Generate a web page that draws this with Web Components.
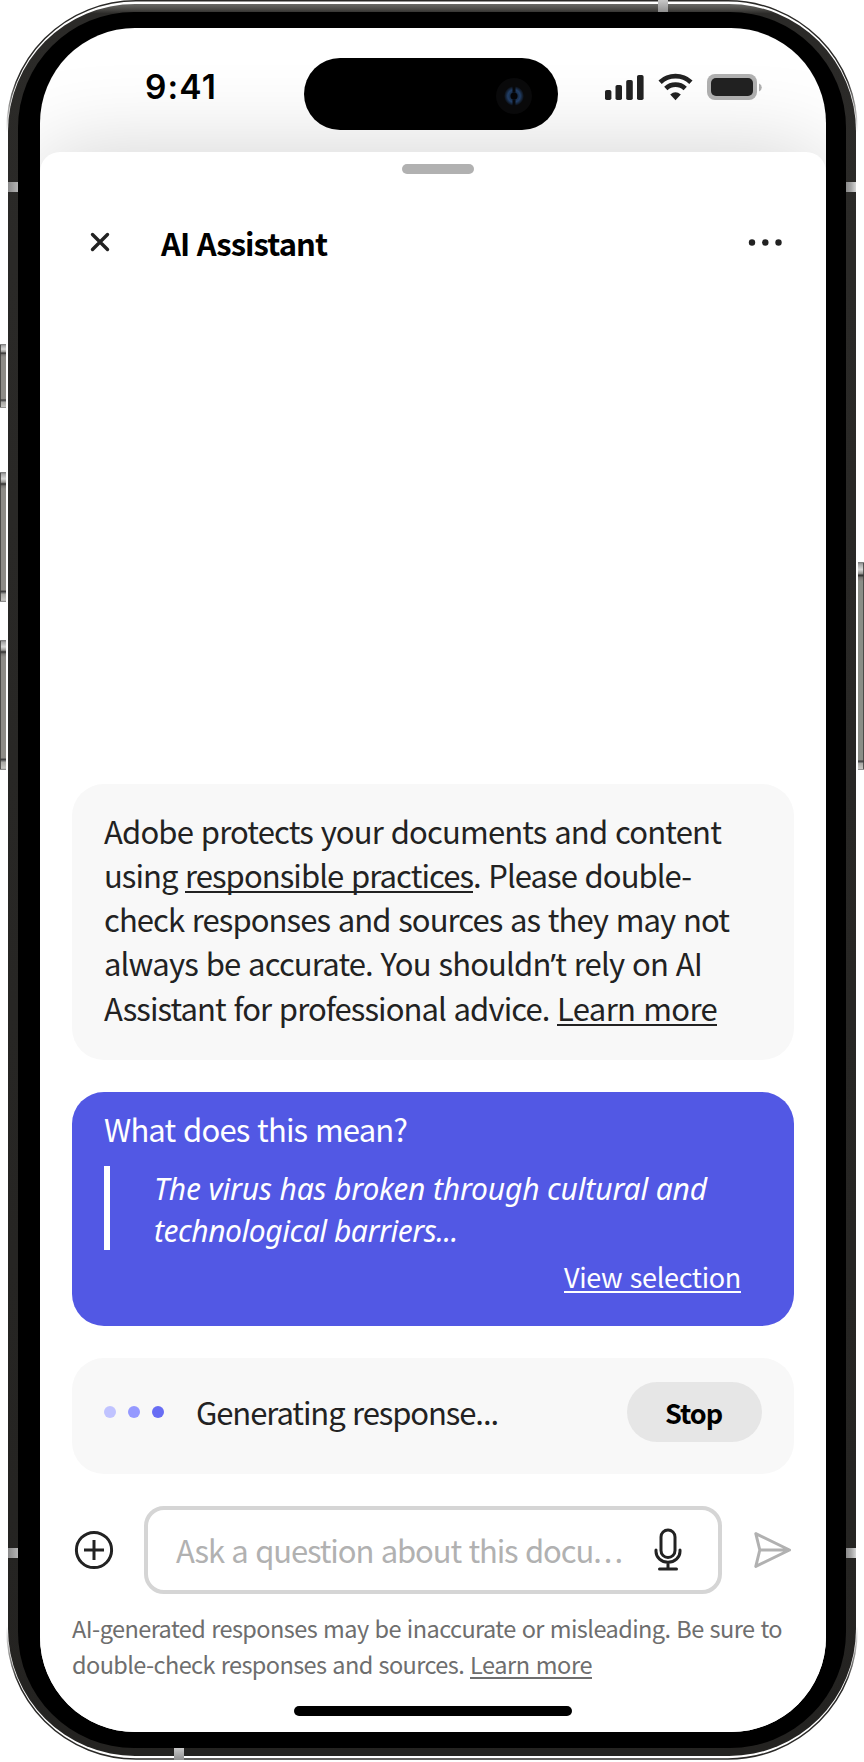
<!DOCTYPE html>
<html lang="en">
<head>
<meta charset="utf-8">
<title>AI Assistant</title>
<style>
html,body{margin:0;padding:0;background:#fff;overflow:hidden}
body{width:864px;height:1762px;font-family:"Noto Sans CJK SC","Noto Sans",sans-serif;color:#222;word-spacing:1.600px}
</style>
</head>
<body>
<device-frame>
  <status-bar></status-bar>
  <bottom-sheet>
    <sheet-header>AI Assistant</sheet-header>
    <chat-view></chat-view>
    <prompt-bar></prompt-bar>
    <legal-note></legal-note>
  </bottom-sheet>
</device-frame>
<script>
function component(name, html) {
  customElements.define(name, class extends HTMLElement {
    constructor() {
      super();
      this.attachShadow({ mode: 'open' }).innerHTML = html;
    }
  });
}

component('device-frame', `
<style>
:host{display:grid;width:864px;height:1762px}
svg,.screen{grid-area:1/1}
.screen{margin:28px 38px 30px 40px;height:1704px;border-radius:95px;overflow:hidden;background:#fff;display:flex;flex-direction:column}
</style>
<svg width="864" height="1762" viewBox="0 0 864 1762">
  <defs>
    <linearGradient id="body" x1="0" y1="0" x2="0" y2="1"><stop offset="0" stop-color="#696966"/><stop offset=".003" stop-color="#4a4946"/><stop offset=".0055" stop-color="#2b2a28"/><stop offset="1" stop-color="#242321"/></linearGradient>
    <linearGradient id="bl"><stop offset="0" stop-color="#8a8a8a"/><stop offset="1" stop-color="#b4b4b4"/></linearGradient>
    <linearGradient id="br"><stop offset="0" stop-color="#8a8a8a"/><stop offset=".5" stop-color="#a4a4a4"/><stop offset="1" stop-color="#d4d4d4"/></linearGradient>
    <linearGradient id="bv" x1="0" y1="0" x2="0" y2="1"><stop offset="0" stop-color="#c8c8c8"/><stop offset="1" stop-color="#8f8f8f"/></linearGradient>
    <linearGradient id="cap" x1="0" y1="0" x2="0" y2="1"><stop offset="0" stop-color="#777"/><stop offset=".14" stop-color="#aaa"/><stop offset=".4" stop-color="#d8d8d6"/><stop offset=".6" stop-color="#999895"/><stop offset=".7" stop-color="#302f2e"/><stop offset=".82" stop-color="#777572"/><stop offset="1" stop-color="#8e8c87"/></linearGradient>
    <linearGradient id="foot" x1="0" y1="0" x2="0" y2="1"><stop offset="0" stop-color="#8e8c87"/><stop offset=".1" stop-color="#333"/><stop offset=".25" stop-color="#777"/><stop offset=".35" stop-color="#aaa9a5"/><stop offset=".85" stop-color="#c6c5c1"/><stop offset="1" stop-color="#777"/></linearGradient>
    <linearGradient id="edge" gradientUnits="userSpaceOnUse" x1="0" y1="0" x2="0" y2="1762"><stop offset="0" stop-color="#2b2a28"/><stop offset=".045" stop-color="#2b2a28"/><stop offset=".075" stop-color="#2b2a28" stop-opacity="0"/><stop offset=".923" stop-color="#2b2a28" stop-opacity="0"/><stop offset=".955" stop-color="#2b2a28"/><stop offset="1" stop-color="#2b2a28"/></linearGradient>
  </defs>
  <rect x="7" y=".8" width="850" height="1758.2" rx="129" fill="none" stroke="url(#edge)" stroke-width="1.500"/>
  <rect x="8" y="4" width="848" height="1752" rx="127" fill="url(#body)"/>
  <rect x="18" y="12" width="828" height="1736" rx="116"/>
  <rect x="8" y="182" width="10" height="10" fill="url(#bl)"/>
  <rect x="846" y="182" width="10" height="10" fill="url(#br)"/>
  <rect x="8" y="1548" width="10" height="10" fill="url(#bl)"/>
  <rect x="846" y="1548" width="10" height="10" fill="url(#br)"/>
  <rect x="658" y="0" width="10" height="12" fill="url(#bv)"/>
  <rect x="174" y="1748" width="10" height="12" fill="url(#bv)"/>
  <g fill="#8e8c87">
    <rect x="0" y="344" width="6" height="64"/><rect x="0" y="472" width="6" height="130"/><rect x="0" y="640" width="6" height="130"/><rect x="858" y="562" width="6" height="208" fill="#8b8e87"/>
  </g>
  <g fill="url(#cap)">
    <rect x="0" y="344" width="6" height="13"/><rect x="0" y="472" width="6" height="17"/><rect x="0" y="640" width="6" height="17"/><rect x="858" y="562" width="6" height="19"/>
  </g>
  <g fill="url(#foot)">
    <rect x="0" y="399" width="6" height="9"/><rect x="0" y="590" width="6" height="12"/><rect x="0" y="758" width="6" height="12"/><rect x="858" y="760" width="6" height="10"/>
  </g>
  <g fill="#3c3b39" opacity=".8"><rect x="0" y="345" width="1" height="62"/><rect x="0" y="473" width="1" height="128"/><rect x="0" y="641" width="1" height="128"/><rect x="863" y="563" width="1" height="206"/></g>
</svg>
<div class="screen"><slot></slot></div>`);

component('status-bar', `
<style>
:host{display:flex;height:124px;flex:none;box-sizing:border-box;align-items:flex-start}
.time{font:600 33.500px/40px Inter,sans-serif;color:#000;margin:39px 0 0 105px;width:159px}
.island{width:254px;height:72px;margin-top:30px;border-radius:36px;background:#000;display:flex;justify-content:flex-end;align-items:center}
.island svg{margin:4px 26px 0 0}
.icons{margin:44px 0 0 45px}
</style>
<div class="time"><t-fit w="72">9:41</t-fit></div>
<div class="island"><svg width="36" height="36" viewBox="0 0 36 36"><defs><radialGradient id="lens"><stop offset="0" stop-color="#050608"/><stop offset=".35" stop-color="#172b46"/><stop offset=".62" stop-color="#223f68"/><stop offset="1" stop-color="#0a0a0b"/></radialGradient></defs><circle cx="18" cy="18" r="18" fill="#0a0a0b"/><circle cx="18" cy="18" r="10" fill="url(#lens)"/><path d="M16.500 8h3v6.500h-3zM16.500 21.500h3v6.500h-3z" fill="#08090b"/><circle cx="18" cy="18" r="3.500" fill="#050507"/></svg></div>
<svg class="icons" width="160" height="30" viewBox="0 0 160 30">
 <g fill="#222"><rect x="2" y="18" width="6.400" height="10" rx="1.800"/><rect x="12.500" y="13" width="6.500" height="15" rx="1.800"/><rect x="23.200" y="8" width="6.600" height="20" rx="1.800"/><rect x="34" y="3" width="6.600" height="25" rx="1.800"/></g>
 <g fill="none" stroke="#222" stroke-width="4.800"><path d="M57.100 10.200a22.800 22.800 0 0 1 30.800 0"/><path d="M62.800 16.500a14.200 14.200 0 0 1 19.400 0"/></g>
 <path d="M67.200 22.600q5.300-4.500 10.600 0l-5.300 5.600z" fill="#222"/>
 <rect x="104" y="2" width="50" height="26" rx="8" fill="#b1b1b1"/><rect x="108" y="6" width="42" height="18" rx="5" fill="#222"/>
 <path d="M156 11.500q2.800 1.200 2.800 4t-2.800 4z" fill="#b1b1b1"/>
</svg>`);

component('bottom-sheet', `
<style>
:host{display:flex;flex-direction:column;flex:1;background:#fff;border-radius:20px 20px 0 0;box-shadow:0 0 90px rgba(0,0,0,.18)}
.handle{width:72px;height:10px;border-radius:5px;background:#b1b1b1;margin:12px 0 0 362px}
.home{width:278px;height:10px;border-radius:5px;background:#000;margin:0 0 16px 254px}
.gap{flex:1}
</style>
<div class="handle"></div><slot></slot><div class="gap"></div><div class="home"></div>`);

component('sheet-header', `
<style>
:host{display:flex;align-items:center;height:60px;margin:39px 42px 0 48px;font-size:31px;font-weight:700;color:#000}
.x{margin-right:49px}
.t{flex:1;line-height:44px}
</style>
<svg class="x" width="24" height="24" viewBox="0 0 24 24"><path d="M4.500 3.500l15 15M19.500 3.500l-15 15" stroke="#222" stroke-width="3.400" stroke-linecap="round"/></svg>
<div class="t"><t-fit w="166">AI Assistant</t-fit></div>
<svg width="36" height="10" viewBox="0 0 36 10" fill="#222"><circle cx="4" cy="4.500" r="3.200"/><circle cx="17.300" cy="4.500" r="3.200"/><circle cx="30.500" cy="4.500" r="3.200"/></svg>`);

component('chat-view', `
<style>
:host{display:flex;flex-direction:column;gap:32px;margin:511px 32px 0 32px;font-size:31px;line-height:44px}
.card{border-radius:32px;background:#f8f8f8;box-sizing:border-box}
.line{display:flex}
.notice{height:276px;padding:25px 32px}
.user{height:234px;padding:15px 32px 0;background:#5258e4;color:#fff}
.quote{margin-top:15px;height:84px;box-sizing:border-box;border-left:6px solid #fff;padding:2px 0 0 44px;font:italic 30px/42px "Noto Sans",sans-serif;word-spacing:0}
.view{display:flex;justify-content:flex-end;margin:7px 21px 0 0;font-size:27px;line-height:40px}
.busy{height:116px;padding:24px 32px;display:flex;align-items:flex-start}
.dots{margin:24px 26px 0 0}
.msg{flex:1;margin-top:8px}
button{all:unset;box-sizing:border-box;width:135px;height:60px;border-radius:30px;background:#e6e6e6;color:#000;font-weight:700;font-size:27px;line-height:59px;text-align:center;padding-right:2px}
</style>
<div class="card notice">
 <div class="line"><t-fit w="617">Adobe protects your documents and content</t-fit></div>
 <div class="line"><t-fit w="81">using </t-fit><t-fit w="288" link>responsible practices</t-fit><t-fit w="218">. Please double-</t-fit></div>
 <div class="line"><t-fit w="625">check responses and sources as they may not</t-fit></div>
 <div class="line"><t-fit w="598">always be accurate. You shouldn<span style="font-family:'Noto Sans'">’</span>t rely on AI</t-fit></div>
 <div class="line"><t-fit w="453">Assistant for professional advice. </t-fit><t-fit w="160" link>Learn more</t-fit></div>
</div>
<div class="card user">
 <div class="line"><t-fit w="303">What does this mean?</t-fit></div>
 <div class="quote"><div class="line"><t-fit w="553">The virus has broken through cultural and</t-fit></div><div class="line"><t-fit w="304">technological barriers...</t-fit></div></div>
 <div class="view"><t-fit w="177" link>View selection</t-fit></div>
</div>
<div class="card busy">
 <svg class="dots" width="66" height="12" viewBox="0 0 66 12"><circle cx="6" cy="6" r="6" fill="#c0c3ff"/><circle cx="30" cy="6" r="6" fill="#9599ff"/><circle cx="54" cy="6" r="6" fill="#686df4"/></svg>
 <div class="msg"><t-fit w="302">Generating response...</t-fit></div>
 <button><t-fit w="57">Stop</t-fit></button>
</div>`);

component('prompt-bar', `
<style>
:host{display:flex;align-items:center;height:88px;margin:32px 32px 0;font-size:31px;line-height:44px}
.field{display:flex;align-items:center;box-sizing:border-box;width:578px;height:88px;border:4px solid #d5d5d5;border-radius:20px;margin:0 28px;padding:0 34px 0 28px}
.ph{flex:1;color:#b1b1b1}
svg{flex:none}
</style>
<svg width="44" height="44" viewBox="0 0 44 44" fill="none" stroke="#222" stroke-width="3"><circle cx="22" cy="22" r="17.600"/><path d="M22 12v20M12 22h20"/></svg>
<div class="field"><div class="ph"><t-fit w="449">Ask a question about this docu<span style="letter-spacing:2px">...</span></t-fit></div>
<svg width="32" height="44" viewBox="0 0 32 44" fill="none" stroke="#222" stroke-width="3" stroke-linecap="round"><rect x="9" y="2" width="14" height="27.500" rx="7"/><path d="M4 22v1.500a12 10.800 0 0 0 24 0V22M16 34.500v6M7.500 41h17"/></svg></div>
<svg width="44" height="44" viewBox="0 0 44 44" fill="none" stroke="#b1b1b1" stroke-width="3" stroke-linejoin="round"><path d="M5.800 5.600L39.500 22 5.800 38.400l4-16.400zM9.800 22H39"/></svg>`);

component('legal-note', `
<style>
:host{display:block;margin:16px 32px 0;font-size:23.500px;line-height:36px;color:#6e6e6e;word-spacing:1.200px;--u:1.500px}
.line{display:flex}
</style>
<div class="line"><t-fit w="710">AI-generated responses may be inaccurate or misleading. Be sure to</t-fit></div>
<div class="line"><t-fit w="398">double-check responses and sources. </t-fit><t-fit w="122" link>Learn more</t-fit></div>`);

/* A run of text tracked to an exact measure. */
customElements.define('t-fit', class extends HTMLElement {
  constructor() {
    super();
    this.attachShadow({ mode: 'open' }).innerHTML = '<style>' +
      ':host{display:inline-block;white-space:pre;vertical-align:top}' +
      ':host([link]){text-decoration:underline;text-decoration-thickness:var(--u,2px);text-underline-offset:3px;text-decoration-skip-ink:none}' +
      '</style><slot></slot>';
  }
  connectedCallback() {
    const fixed = this.querySelector('[style*="letter-spacing"]');
    const count = this.textContent.length - (fixed ? fixed.textContent.length : 0);
    this.style.letterSpacing = '0px';
    const natural = this.getBoundingClientRect().width;
    this.style.letterSpacing = (this.getAttribute('w') - natural) / count + 'px';
  }
});
</script>
</body>
</html>
